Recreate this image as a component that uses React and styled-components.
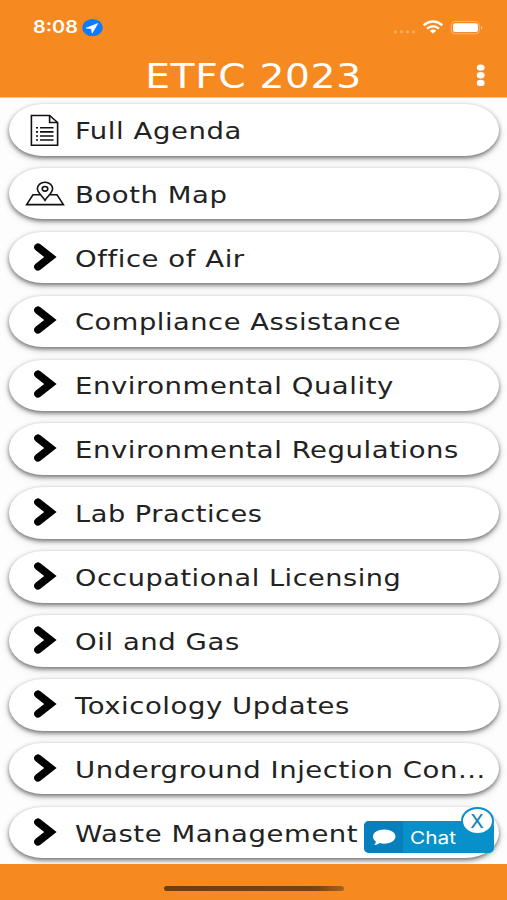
import React from 'react';
import styled, { createGlobalStyle } from 'styled-components';

const GlobalStyle = createGlobalStyle`
  * {
    box-sizing: border-box;
  }
  body {
    margin: 0;
    background: #fff;
    font-family: Verdana, "DejaVu Sans", sans-serif;
  }
`;

const Screen = styled.div`
  position: relative;
  display: flex;
  flex-direction: column;
  width: 507px;
  height: 900px;
  overflow: hidden;
`;

const Header = styled.header`
  flex: 0 0 98px;
  background: #f6891f;
  border-bottom: 1px solid #fbc48c;
  color: #fff;
`;

const StatusBar = styled.div`
  display: flex;
  justify-content: space-between;
  height: 54px;
  padding: 18px 23px 0 33px;
`;

const StatusGroup = styled.div`
  display: flex;
  align-items: center;
  height: 19px;
`;

const Clock = styled.span`
  width: 49px;
  font-family: Inter, "Liberation Sans", sans-serif;
  font-size: 17px;
  font-weight: 600;
  line-height: 19px;
  white-space: nowrap;
  transform: scaleX(1.17);
  transform-origin: left center;
`;

const TitleBar = styled.div`
  display: grid;
  grid-template-columns: 60px 1fr 60px;
  align-items: center;
  height: 43px;
`;

const Title = styled.h1`
  margin: 0;
  font-size: 33px;
  font-weight: 400;
  line-height: 43px;
  letter-spacing: 0.5px;
  text-align: center;
  white-space: nowrap;
  transform: translateY(0.6px) scaleX(1.19);
`;

const MenuButton = styled.button`
  display: flex;
  justify-content: center;
  padding: 0 0 0 8px;
  border: 0;
  background: none;
`;

const List = styled.main`
  flex: 1;
  display: flex;
  flex-direction: column;
  gap: 12.4px;
  padding: 6px 8px 0 9px;
  background: #fdfdfd;
  overflow: hidden;
`;

const Item = styled.div`
  flex: 0 0 51.5px;
  display: flex;
  align-items: center;
  border-radius: 34px / 26px;
  background: #fff;
  box-shadow: 0 2px 4px rgba(0, 0, 0, 0.5), 0 3px 8px rgba(0, 0, 0, 0.14);
`;

const ItemIcon = styled.div`
  display: flex;
  justify-content: center;
  flex: 0 0 66px;
  padding-left: 5px;
`;

const Label = styled.div`
  color: #222;
  font-size: 22.5px;
  line-height: 30px;
  letter-spacing: 0.45px;
  white-space: nowrap;
  transform: translateY(0.5px) scaleX(${(props) => props.$stretch});
  transform-origin: left center;
`;

const Footer = styled.footer`
  flex: 0 0 36px;
  display: flex;
  justify-content: center;
  padding-top: 22px;
  background: #f6891f;
`;

const HomeIndicator = styled.div`
  width: 180px;
  height: 5px;
  border-radius: 3px;
  background: linear-gradient(90deg, #6b3f12, #744413 85%, #a86322);
`;

const ChatWidget = styled.div`
  position: absolute;
  left: 364px;
  top: 821px;
  display: flex;
  width: 130px;
  height: 32px;
  border-radius: 5px;
  background: #0890cb;
  color: #fff;
`;

const ChatIcon = styled.div`
  display: flex;
  align-items: center;
  justify-content: center;
  width: 39px;
  border-radius: 5px 0 0 5px;
  background: #087fbd;
`;

const ChatText = styled.span`
  padding-left: 7px;
  font-family: Inter, "Liberation Sans", sans-serif;
  font-size: 17.5px;
  line-height: 34px;
  transform: scaleX(1.19);
  transform-origin: 7px center;
`;

const ChatClose = styled.button`
  position: absolute;
  left: 96.5px;
  top: -14px;
  display: flex;
  align-items: center;
  justify-content: center;
  width: 33px;
  height: 28px;
  padding: 0;
  border: 2px solid #0890cb;
  border-radius: 50%;
  background: #fff;
  color: #0a80b8;
`;

const CloseLabel = styled.span`
  font-family: "Liberation Sans", sans-serif;
  font-size: 19.5px;
  line-height: 24px;
  -webkit-text-stroke: 0.2px #0a80b8;
`;

const LocationIcon = () => (
  <svg width="21" height="18" viewBox="0 0 21 18">
    <ellipse cx="10.5" cy="8.7" rx="10.3" ry="8.6" fill="#0a7cff" />
    <path d="M15.8 4.5 4.2 9.1l5.3.6.6 4.5z" fill="#fff" stroke="#fff" strokeWidth="0.6" strokeLinejoin="round" />
  </svg>
);

const SignalIcons = () => (
  <svg width="93" height="18" viewBox="0 0 93 18">
    <g fill="#fff" opacity="0.3">
      <ellipse cx="4.5" cy="13" rx="1.7" ry="1.4" />
      <ellipse cx="10.5" cy="13" rx="1.7" ry="1.4" />
      <ellipse cx="16.5" cy="13" rx="1.7" ry="1.4" />
      <ellipse cx="22.5" cy="13" rx="1.7" ry="1.4" />
    </g>
    <g transform="translate(0 -0.6)">
      <g fill="none" stroke="#fff" strokeWidth="2.4">
        <path d="M32.6 6.8q9.4-7.6 18.8 0" />
        <path d="M36 10.2q6-4.8 12 0" />
      </g>
      <path d="M38.7 12.4q3.3-2.4 6.600 0L42 15.4z" fill="#fff" />
      <rect x="60.3" y="3" width="28" height="12.4" rx="3.5" fill="none" stroke="#fff" strokeOpacity="0.4" />
      <rect x="62" y="4.800" width="25" height="8.900" rx="2" fill="#fff" />
      <path d="M90 7.3q3 2 0 4z" fill="#fff" opacity="0.5" />
    </g>
  </svg>
);

const DotsIcon = () => (
  <svg width="10" height="24" viewBox="0 0 10 24" fill="#fff">
    <ellipse cx="4.700" cy="3.600" rx="3.900" ry="3.200" />
    <ellipse cx="4.700" cy="11.200" rx="3.900" ry="3.200" />
    <ellipse cx="4.700" cy="18.900" rx="3.900" ry="3.200" />
  </svg>
);

const AgendaIcon = () => (
  <svg width="30" height="32" viewBox="0 0 30 32" fill="none" stroke="#111" strokeWidth="1.6">
    <path d="M1.4 1.5h18.2l8 7V31.300H1.4z" />
    <path d="M19.6 1.5v7h8" />
    <path d="M6 13.8h2M10 13.8h13.500M6 17.900h2M10 17.900h13.500M6 22h2M10 22h13.500M6 26h2M10 26h13.500" />
  </svg>
);

const MapIcon = () => (
  <svg width="40" height="26" viewBox="0 0 40 26" fill="none" stroke="#111" strokeWidth="1.6">
    <path d="M15 13.7H8L1.6 23.6h36.8L32 13.7h-7" />
    <path d="M20 19.4C17.2 14.8 12.4 12 12.4 7.8c0-3.8 3.4-6.6 7.6-6.6s7.6 2.8 7.6 6.6c0 4.2-4.8 7-7.6 11.6z" />
    <ellipse cx="20" cy="7.8" rx="2.8" ry="2.3" />
  </svg>
);

const ChevronIcon = () => (
  <svg width="24" height="30" viewBox="0 0 24 30">
    <path d="M5 4.2 17.4 14 5 23.8" fill="none" stroke="#000" strokeWidth="7.7" strokeLinecap="round" />
  </svg>
);

const BubbleIcon = () => (
  <svg width="24" height="17" viewBox="0 0 24 17">
    <path d="M12.3.5C18.7.5 23.5 3.6 23.5 7.6s-4.8 7.1-11.2 7.1c-1.7 0-3.3-.2-4.7-.7-1.4 1.2-3.3 2-5.6 2 1.1-1 1.8-2.2 1.9-3.5C2.1 11.3.9 9.6.9 7.6.9 3.6 5.9.5 12.3.5z" fill="#fff" />
  </svg>
);

const items = [
  { name: 'Full Agenda', icon: AgendaIcon },
  { name: 'Booth Map', icon: MapIcon },
  { name: 'Office of Air' },
  { name: 'Compliance Assistance', stretch: 1.212 },
  { name: 'Environmental Quality' },
  { name: 'Environmental Regulations' },
  { name: 'Lab Practices', stretch: 1.208 },
  { name: 'Occupational Licensing', stretch: 1.205 },
  { name: 'Oil and Gas' },
  { name: 'Toxicology Updates' },
  { name: 'Underground Injection Con...' },
  { name: 'Waste Management' },
];

const App = () => (
  <>
    <GlobalStyle />
    <Screen>
      <Header>
        <StatusBar>
          <StatusGroup>
            <Clock>8:08</Clock>
            <LocationIcon />
          </StatusGroup>
          <StatusGroup>
            <SignalIcons />
          </StatusGroup>
        </StatusBar>
        <TitleBar>
          <span />
          <Title>ETFC 2023</Title>
          <MenuButton aria-label="Menu"><DotsIcon /></MenuButton>
        </TitleBar>
      </Header>
      <List>
        {items.map(({ name, icon: Icon = ChevronIcon, stretch = 1.223 }) => (
          <Item key={name}>
            <ItemIcon><Icon /></ItemIcon>
            <Label $stretch={stretch}>{name}</Label>
          </Item>
        ))}
      </List>
      <Footer>
        <HomeIndicator />
      </Footer>
      <ChatWidget>
        <ChatIcon><BubbleIcon /></ChatIcon>
        <ChatText>Chat</ChatText>
        <ChatClose aria-label="Close chat"><CloseLabel>X</CloseLabel></ChatClose>
      </ChatWidget>
    </Screen>
  </>
);

export default App;
